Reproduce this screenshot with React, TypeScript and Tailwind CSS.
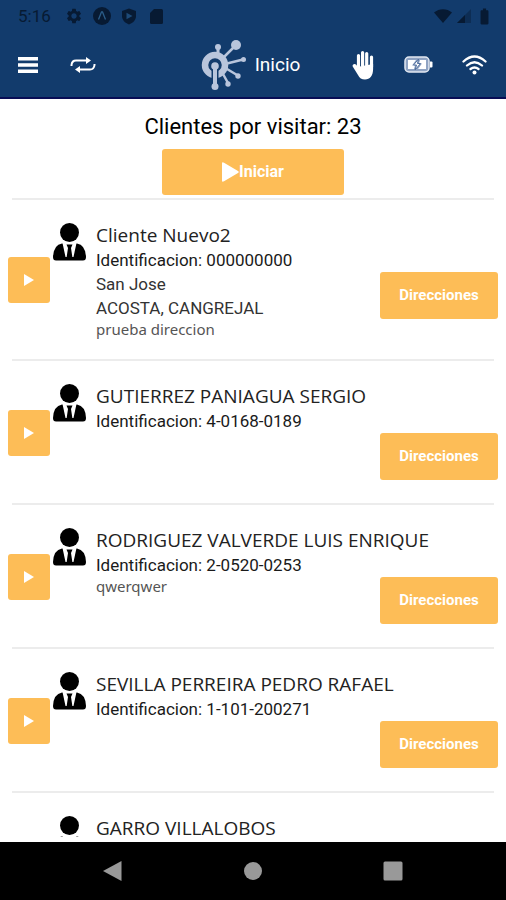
import type { ReactNode } from 'react'
import { MdSettings, MdBatteryFull } from 'react-icons/md'

interface Client {
  name: string
  id?: string
  places?: string[]
  note?: string
}

const CLIENTS: Client[] = [
  {
    name: 'Cliente Nuevo2',
    id: '000000000',
    places: ['San Jose', 'ACOSTA, CANGREJAL'],
    note: 'prueba direccion',
  },
  { name: 'GUTIERREZ PANIAGUA SERGIO', id: '4-0168-0189' },
  { name: 'RODRIGUEZ VALVERDE LUIS ENRIQUE', id: '2-0520-0253', note: 'qwerqwer' },
  { name: 'SEVILLA PERREIRA PEDRO RAFAEL', id: '1-101-200271' },
  { name: 'GARRO VILLALOBOS' },
]

function StatusBar() {
  return (
    <div className="flex h-8 items-center justify-between pl-[18px] pr-3 text-[#071a33]">
      <div className="flex items-center gap-[10px]">
        <span className="mr-1 text-[17px] leading-5">5:16</span>
        <MdSettings size={18} />
        <svg width="18" height="18" viewBox="0 0 18 18">
          <circle cx="9" cy="9" r="9" fill="currentColor" />
          <path d="M5.5 12.500 8.500 5h1l3 7.500" fill="none" stroke="#2a5c88" strokeWidth="1.300" />
        </svg>
        <svg width="16" height="17" viewBox="0 0 16 17">
          <path d="M8 .5 15 3v5c0 4-3 7-7 8.500C4 15 1 12 1 8V3Z" fill="currentColor" />
          <path d="M5.500 4.800 11.500 8l-6 3.200Z" fill="#1d4a78" />
        </svg>
        <svg width="18" height="17" viewBox="0 0 18 17">
          <path d="M7 1h7.500q1.500 0 1.500 1.500v12q0 1.500-1.500 1.500h-10Q3 16 3 14.500V5Z" fill="currentColor" />
        </svg>
      </div>
      <div className="flex items-center gap-1">
        <svg width="20" height="16" viewBox="0 0 20 16">
          <path d="M1 4.500C6 0 14 0 19 4.500L10 15Z" fill="currentColor" />
        </svg>
        <svg width="14" height="16" viewBox="0 0 14 16">
          <path d="M0 15 14 1V15Z" fill="currentColor" opacity="0.4" />
          <path d="M0 15 8 7V15Z" fill="currentColor" />
        </svg>
        <MdBatteryFull size={19} />
      </div>
    </div>
  )
}

function Logo() {
  return (
    <svg width="46" height="52" viewBox="0 0 46 52" fill="none" stroke="#b9c5dc" strokeLinecap="round">
      <circle cx="14" cy="26" r="10" strokeWidth="6.500" />
      <path d="M14 29V48" stroke="#123b6c" strokeWidth="7" strokeLinecap="butt" />
      <path d="M14 27V48" strokeWidth="4" />
      <circle cx="14" cy="27" r="3.800" fill="#b9c5dc" stroke="none" />
      <circle cx="14" cy="47.500" r="3.500" fill="#b9c5dc" stroke="none" />
      <path d="M17 16V9" strokeWidth="3" />
      <circle cx="17" cy="8" r="3" fill="#b9c5dc" stroke="none" />
      <path d="M23 18 34 7" strokeWidth="2.500" />
      <circle cx="35" cy="6" r="5" fill="#b9c5dc" stroke="none" />
      <path d="M26 24.500 42 20.500M26 30 36 36M22 35 27 44" strokeWidth="2.500" />
      <circle cx="42.500" cy="20.500" r="2.500" fill="#b9c5dc" stroke="none" />
      <circle cx="37" cy="37" r="2.700" fill="#b9c5dc" stroke="none" />
      <circle cx="27" cy="45" r="2.700" fill="#b9c5dc" stroke="none" />
    </svg>
  )
}

function IconButton({ label, children }: { label: string; children: ReactNode }) {
  return (
    <button type="button" aria-label={label} className="flex items-center justify-center">
      {children}
    </button>
  )
}

function Toolbar() {
  return (
    <div className="flex h-[65px] items-center justify-between pl-[18px] pr-[19px] text-white">
      <div className="flex flex-1 items-center gap-8">
        <IconButton label="Menu">
          <svg width="20" height="16" viewBox="0 0 20 16" fill="currentColor">
            <path d="M0 0h20v3.500H0zM0 6.200h20v3.500H0zM0 12.400h20v3.500H0z" />
          </svg>
        </IconButton>
        <IconButton label="Sincronizar">
          <svg width="26" height="18" viewBox="0 0 26 18" fill="none" stroke="currentColor" strokeWidth="2">
            <path d="M1.500 10V9Q2 4.500 6 4.500H17M24.500 8V9Q24 13.500 20 13.500H9" />
            <path d="M16 1 21 4.500 16 8ZM10 10 5 13.500 10 17Z" fill="currentColor" stroke="none" />
          </svg>
        </IconButton>
      </div>
      <div className="mr-1 flex items-center gap-2">
        <Logo />
        <h1 className="text-[19px] leading-6">Inicio</h1>
      </div>
      <div className="flex flex-1 items-center justify-end gap-[29px]">
        <IconButton label="Pausa">
          <svg width="24" height="30" viewBox="0 0 24 30" fill="none" stroke="currentColor" strokeLinecap="round">
            <path d="M7.500 17V5.500M11.600 16V2.500M15.700 16V3.500M20.500 17V7" strokeWidth="3.200" />
            <path d="M6 17 22.100 14V19C22.100 25.500 19 29.500 14 29.500 10.500 29.500 8.500 28 7 25L1.700 16.500C1 14.500 3.500 13 5 14.500L7 17Z" fill="currentColor" stroke="none" />
          </svg>
        </IconButton>
        <IconButton label="Batería">
          <svg width="29" height="17" viewBox="0 0 29 17">
            <rect x="1" y="1" width="24" height="15" rx="4" fill="#8fa3c3" stroke="#e3e9f2" strokeWidth="1.500" />
            <path d="M26 5.500h1.500q1 0 1 1v4q0 1-1 1H26Z" fill="#fff" />
            <path d="M4 4h8l-4 5.500h3L10 13H4ZM16 4h6v9h-8l4-5.500h-3Z" fill="#fff" />
            <path d="M14.500 3 9.500 9h3L11 14l5.500-6.500h-3Z" fill="#fff" stroke="#52709e" strokeWidth="1" />
          </svg>
        </IconButton>
        <IconButton label="Wifi">
          <svg width="25" height="20" viewBox="0 0 25 20" fill="none" stroke="currentColor" strokeWidth="2.300" strokeLinecap="round">
            <path d="M1.500 6.500Q12.500-3.500 23.500 6.500M5 10.500Q12.500 4 20 10.500M8.500 14Q12.500 11 16.500 14" />
            <circle cx="12.500" cy="17.500" r="2" fill="currentColor" stroke="none" />
          </svg>
        </IconButton>
      </div>
    </div>
  )
}

function PersonIcon() {
  return (
    <svg width="33" height="38" viewBox="0 0 33 38" className="mt-[1px] shrink-0">
      <circle cx="16.500" cy="9.500" r="9.500" fill="#000" />
      <path d="M9 20.500H24Q32.500 22 33 34 33 37.500 30 37.500H3Q0 37.500 0 34 .5 22 9 20.500Z" fill="#000" />
      <path d="M9.500 20 12.500 34H20.500L23.500 20Z" fill="#fff" />
      <path d="M13.500 21.500H19.500L18 25 19.500 35H13.500L15 25Z" fill="#000" />
    </svg>
  )
}

function ClientRow({ client }: { client: Client }) {
  return (
    <li>
      <div className="flex px-2 pb-[21px] pt-[22px]">
        <button
          type="button"
          aria-label={`Iniciar ${client.name}`}
          className="mr-[3px] flex h-[46px] w-[42px] shrink-0 items-center justify-center self-center rounded-[3px] bg-[#fdbd57]"
        >
          <svg width="10" height="12" viewBox="0 0 10 12">
            <path d="M0 0 10 6 0 12Z" fill="#fff" />
          </svg>
        </button>
        <PersonIcon />
        {/* the name may run above the Direcciones button, so both share one cell */}
        <div className="ml-[10px] grid min-h-[99px] flex-1">
          <div className="col-start-1 row-start-1">
            <h2 className="font-['Open_Sans',sans-serif] text-[19px] leading-[26px] text-[#222]">{client.name}</h2>
            {client.id && <p className="text-[17px] leading-6">Identificacion: {client.id}</p>}
            {client.places?.map((place) => (
              <p key={place} className="text-[17px] leading-6 text-[#333]">
                {place}
              </p>
            ))}
            {client.note && (
              <p className="font-['Noto_Sans',sans-serif] text-[15px] leading-[18px] text-[#555]">{client.note}</p>
            )}
          </div>
          {client.id && (
            <button
              type="button"
              className="col-start-1 row-start-1 mb-[2px] mt-[50px] h-[47px] w-[118px] justify-self-end self-start rounded-[3px] bg-[#fdbd57] text-[15px] font-bold text-white"
            >
              Direcciones
            </button>
          )}
        </div>
      </div>
      <hr className="mx-3 border-t-2 border-[#ececec]" />
    </li>
  )
}

function NavBar() {
  return (
    <nav className="flex h-[58px] shrink-0 items-center justify-center gap-[120px] bg-black text-[#999]">
      <IconButton label="Atrás">
        <svg width="20" height="20" viewBox="0 0 20 20" fill="currentColor">
          <path d="M0 10 18.500 0V20Z" />
        </svg>
      </IconButton>
      <IconButton label="Principal">
        <svg width="20" height="20" viewBox="0 0 20 20" fill="currentColor">
          <circle cx="10" cy="10" r="9" />
        </svg>
      </IconButton>
      <IconButton label="Recientes">
        <svg width="20" height="20" viewBox="0 0 20 20" fill="currentColor">
          <rect x="0.500" y="0.500" width="19" height="19" rx="1.500" />
        </svg>
      </IconButton>
    </nav>
  )
}

export default function App() {
  return (
    <div className="flex h-screen flex-col overflow-hidden bg-white font-[Roboto,sans-serif] text-[#1a1a1a]">
      <header className="shrink-0 border-b-2 border-[#080d55] bg-[#123b6c]">
        <StatusBar />
        <Toolbar />
      </header>
      <main className="mb-[5px] min-h-0 flex-1 overflow-hidden">
        <section className="flex flex-col items-center pb-[3px] pt-[14px]">
          <p className="text-[22px] leading-7 text-black">Clientes por visitar: 23</p>
          <button
            type="button"
            className="mt-2 flex h-[46px] w-[182px] items-center justify-center rounded-[3px] bg-[#fdbd57] text-base font-bold text-white"
          >
            <svg width="17" height="20" viewBox="0 0 17 20" fill="currentColor">
              <path d="M0 1.500Q0-.5 2 .7L16 9q1.500 1 0 2L2 19.300Q0 20.500 0 18.500Z" />
            </svg>
            Iniciar
          </button>
        </section>
        <hr className="mx-3 border-t-2 border-[#ececec]" />
        <ul>
          {CLIENTS.map((client) => (
            <ClientRow key={client.name} client={client} />
          ))}
        </ul>
      </main>
      <NavBar />
    </div>
  )
}
